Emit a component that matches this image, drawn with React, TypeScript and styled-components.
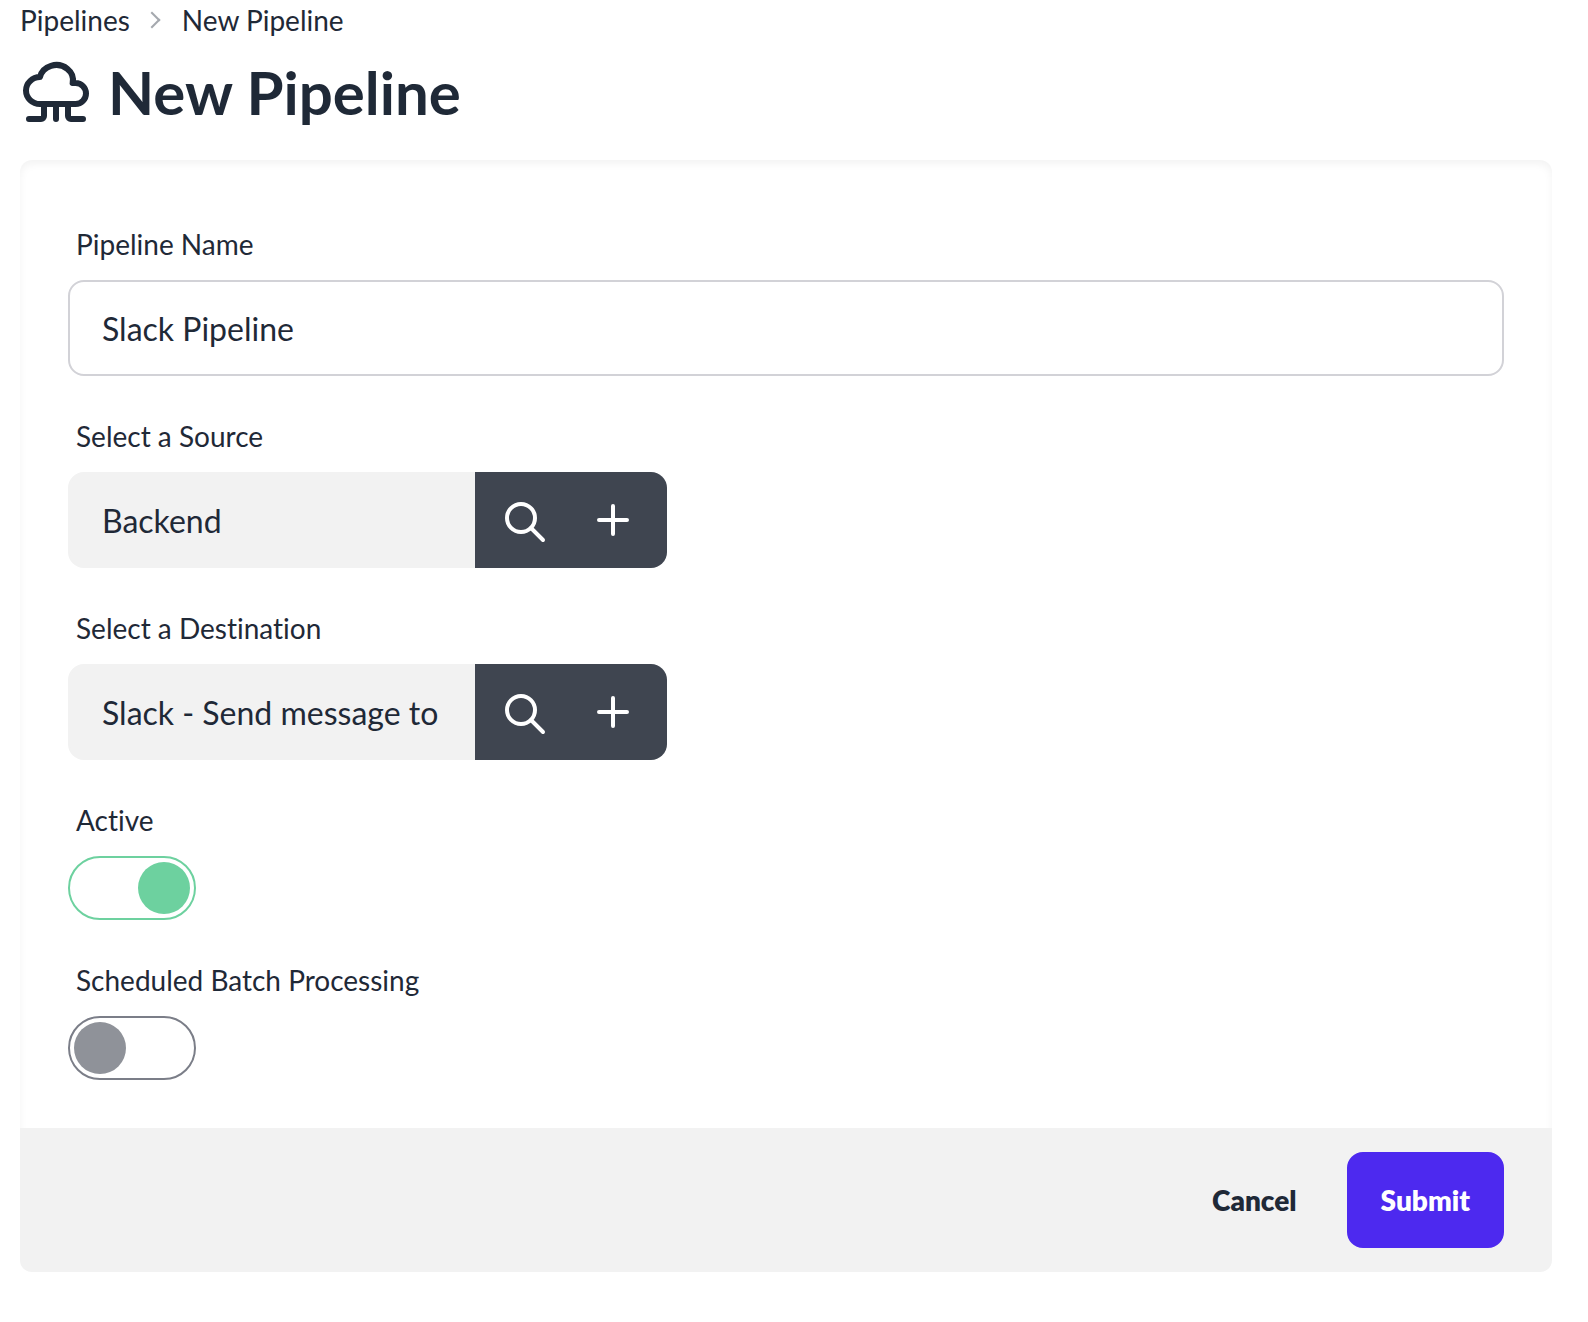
import React, { useState } from "react";
import styled, { createGlobalStyle } from "styled-components";

const color = {
  ink: "#1f2937",
  line: "#d2d2d7",
  muted: "#f2f2f2",
  neutral: "#3f4550",
  primary: "#4d29ef",
  success: "#6dd19f",
  off: "#8f9299",
  offLine: "#7b7e88",
};

const GlobalStyle = createGlobalStyle`
  *, *::before, *::after { box-sizing: border-box; }
  body {
    margin: 0;
    background: #fff;
    color: ${color.ink};
    font-family: Lato, "Liberation Sans", sans-serif;
    font-size: 28px;
    line-height: 40px;
    font-variant-ligatures: none;
  }
`;

const Page = styled.main`
  padding: 0 36px 48px 20px;
`;

const Crumbs = styled.ol`
  display: flex;
  align-items: center;
  margin: 0;
  padding: 0;
  list-style: none;
`;

const Crumb = styled.li`
  display: flex;
  align-items: center;

  & + &::before {
    content: "";
    width: 12px;
    height: 12px;
    margin: 0 24px 0 16px;
    border-top: 2px solid;
    border-right: 2px solid;
    opacity: 0.4;
    transform: rotate(45deg);
  }
`;

const CrumbLink = styled.a`
  color: inherit;
  text-decoration: none;
`;

const Title = styled.h1`
  display: flex;
  align-items: center;
  gap: 16px;
  margin: 16px 0 32px;
  font-size: 60px;
  line-height: 72px;
  font-weight: 700;
`;

const Card = styled.form`
  border-radius: 12px;
  overflow: hidden;
  box-shadow: inset 0 4px 8px rgba(0, 0, 0, 0.05);
`;

const Fields = styled.div`
  display: flex;
  flex-direction: column;
  gap: 24px;
  padding: 48px;
`;

const Field = styled.div`
  display: flex;
  flex-direction: column;
  align-items: flex-start;
`;

const Label = styled.label`
  padding: 16px 8px;
`;

const TextInput = styled.input<{ $joined?: boolean }>`
  width: ${(p) => (p.$joined ? "407px" : "100%")};
  min-width: 0;
  height: 96px;
  padding: 0 32px;
  border: 2px solid ${(p) => (p.$joined ? color.muted : color.line)};
  border-radius: ${(p) => (p.$joined ? "16px 0 0 16px" : "16px")};
  background: ${(p) => (p.$joined ? color.muted : "#fff")};
  color: inherit;
  font: inherit;
  font-size: 32px;
  outline: none;
`;

const Group = styled.div`
  display: flex;
  max-width: 100%;
`;

const Actions = styled.div`
  display: flex;
  padding: 0 10px 0 6px;
  border-radius: 0 16px 16px 0;
  background: ${color.neutral};
`;

const IconButton = styled.button`
  display: flex;
  align-items: center;
  padding: 0 20px;
  border: 0;
  background: none;
  color: #fff;
  cursor: pointer;
`;

const Toggle = styled.input`
  appearance: none;
  display: flex;
  width: 128px;
  height: 64px;
  margin: 0;
  padding: 4px;
  border: 2px solid ${color.offLine};
  border-radius: 32px;
  color: ${color.off};
  cursor: pointer;

  &::before {
    content: "";
    width: 52px;
    height: 52px;
    border-radius: 50%;
    background: currentColor;
  }

  &:checked {
    justify-content: flex-end;
    border-color: ${color.success};
    color: ${color.success};
  }
`;

const Footer = styled.footer`
  display: flex;
  justify-content: flex-end;
  gap: 16px;
  padding: 24px 48px;
  background: ${color.muted};
`;

const Button = styled.button<{ $primary?: boolean }>`
  height: 96px;
  padding: 0 32px;
  border: 2px solid ${(p) => (p.$primary ? color.primary : "transparent")};
  border-radius: 16px;
  background: ${(p) => (p.$primary ? color.primary : "transparent")};
  color: ${(p) => (p.$primary ? "#fff" : color.ink)};
  font: inherit;
  font-weight: 800;
  cursor: pointer;
`;

type IconProps = { size: number; viewBox?: string; children: React.ReactNode };

const Icon = ({ size, viewBox = "0 0 24 24", children }: IconProps) => (
  <svg
    width={size}
    height={size}
    viewBox={viewBox}
    fill="none"
    stroke="currentColor"
    strokeWidth="2"
    strokeLinecap="round"
    strokeLinejoin="round"
    aria-hidden="true"
  >
    {children}
  </svg>
);

const CloudIcon = () => (
  <Icon size={72}>
    <path d="M6.657 16c-2.572 0-4.657-2.007-4.657-4.483 0-2.475 2.085-4.482 4.657-4.482.393-1.762 1.794-3.2 3.675-3.773 1.88-.572 3.956-.193 5.444 1 1.488 1.19 2.162 3.007 1.77 4.769h.99c1.913 0 3.464 1.56 3.464 3.486 0 1.927-1.551 3.487-3.465 3.487H6.657" />
    <path d="M12 16v5M16 16v4a1 1 0 0 0 1 1h4M8 16v4a1 1 0 0 1-1 1H3" />
  </Icon>
);

const SearchIcon = () => (
  <Icon size={48} viewBox="0 -1 24 24">
    <circle cx="10" cy="10" r="7" />
    <path d="M21 21l-6-6" />
  </Icon>
);

const PlusIcon = () => (
  <Icon size={48}>
    <path d="M12 5v14M5 12h14" />
  </Icon>
);

type PickerProps = { id: string; label: string; noun: string; value: string };

const Picker = ({ id, label, noun, value }: PickerProps) => (
  <Field>
    <Label htmlFor={id}>{label}</Label>
    <Group>
      <TextInput id={id} $joined readOnly value={value} />
      <Actions>
        <IconButton type="button" aria-label={`Search ${noun}s`}>
          <SearchIcon />
        </IconButton>
        <IconButton type="button" aria-label={`Add ${noun}`}>
          <PlusIcon />
        </IconButton>
      </Actions>
    </Group>
  </Field>
);

export default function App() {
  const [name, setName] = useState("Slack Pipeline");

  return (
    <>
      <GlobalStyle />
      <Page>
        <nav aria-label="Breadcrumb">
          <Crumbs>
            <Crumb>
              <CrumbLink href="#pipelines">Pipelines</CrumbLink>
            </Crumb>
            <Crumb>New Pipeline</Crumb>
          </Crumbs>
        </nav>
        <Title>
          <CloudIcon />
          New Pipeline
        </Title>
        <Card onSubmit={(e) => e.preventDefault()}>
          <Fields>
            <Field>
              <Label htmlFor="name">Pipeline Name</Label>
              <TextInput id="name" value={name} onChange={(e) => setName(e.target.value)} />
            </Field>
            <Picker id="source" label="Select a Source" noun="source" value="Backend" />
            <Picker
              id="destination"
              label="Select a Destination"
              noun="destination"
              value="Slack - Send message to a channel"
            />
            <Field>
              <Label htmlFor="active">Active</Label>
              <Toggle id="active" type="checkbox" defaultChecked />
            </Field>
            <Field>
              <Label htmlFor="batch">Scheduled Batch Processing</Label>
              <Toggle id="batch" type="checkbox" />
            </Field>
          </Fields>
          <Footer>
            <Button type="button">Cancel</Button>
            <Button type="submit" $primary>
              Submit
            </Button>
          </Footer>
        </Card>
      </Page>
    </>
  );
}
